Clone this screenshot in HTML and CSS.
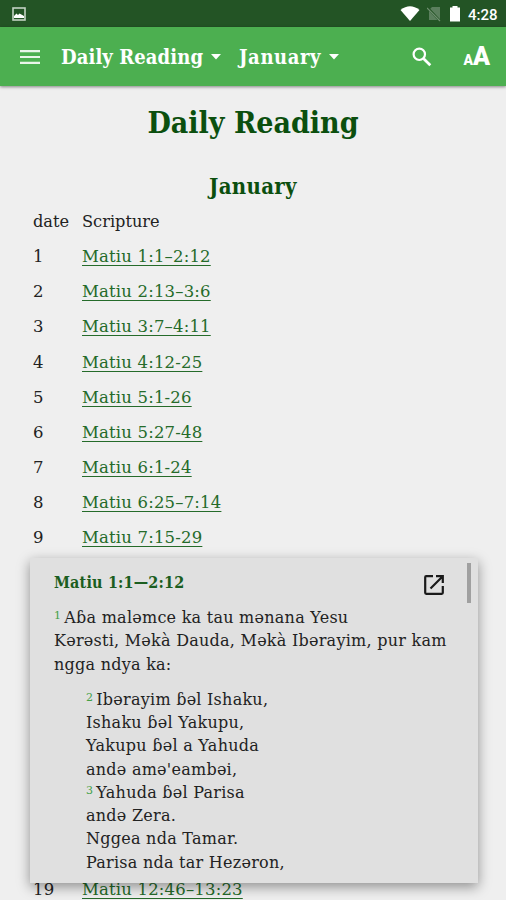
FILE: index.html
```html
<!DOCTYPE html>
<html lang="en">
<head>
  <meta charset="UTF-8">
  <title>Daily Reading</title>
  <link rel="stylesheet" href="styles.css">
</head>
<body>
  <div class="status-bar">
    <svg class="status-picture" width="14" height="14" viewBox="0 0 14 14">
      <rect x="1" y="1" width="12" height="12" fill="none" stroke="#c3d2c4" stroke-width="1.6"/>
      <path d="M2 11V9l2.500-2.500L6 8l1.500-1.500L12 9v2z" fill="#fff"/>
    </svg>
    <div class="status-icons">
      <svg width="20" height="15" viewBox="0 0 20 15"><path d="M.5 4Q10-3.500 19.500 4L10 15z" fill="#fff"/></svg>
      <svg class="no-sim" width="14" height="16" viewBox="0 0 14 16">
        <path d="M5 1h8v13H2V4z" fill="#5b7f5d"/>
        <path d="M0 1l13 14" stroke="#235425" stroke-width="2.500"/>
        <path d="M0 2l13 13" stroke="#6f8f70" stroke-width="1.200"/>
      </svg>
      <svg class="battery" width="12" height="16" viewBox="0 0 12 16"><path d="M3.500 0h5v1.500H11V15.500H1V1.500h2.500z" fill="#fff"/></svg>
      <span class="clock">4:28</span>
    </div>
  </div>

  <div class="app-bar">
    <svg class="menu-icon" width="20" height="14" viewBox="0 0 20 14"><path d="M0 1.200h20M0 7h20M0 12.800h20" stroke="#e9f5e9" stroke-width="2.200"/></svg>
    <div class="picker book">Daily Reading</div>
    <svg class="caret" width="10" height="6" viewBox="0 0 10 6"><path d="M0 0h10L5 5.500z" fill="#fff"/></svg>
    <div class="picker month">January</div>
    <svg class="caret" width="10" height="6" viewBox="0 0 10 6"><path d="M0 0h10L5 5.500z" fill="#fff"/></svg>
    <svg class="search-icon" width="20" height="20" viewBox="0 0 20 20" fill="none" stroke="#fff">
      <circle cx="7.300" cy="7.300" r="5.700" stroke-width="2.200"/>
      <path d="M11.700 11.700l6.600 6.600" stroke-width="2.700"/>
    </svg>
    <div class="text-size"><span class="small-a">A</span><span class="big-a">A</span></div>
  </div>

  <div class="content">
    <h1>Daily Reading</h1>
    <h2>January</h2>
    <div class="plan">
      <div class="row head"><span class="date">date</span><span>Scripture</span></div>
      <div class="row"><span class="date">1</span><a>Matiu 1:1–2:12</a></div>
      <div class="row"><span class="date">2</span><a>Matiu 2:13–3:6</a></div>
      <div class="row"><span class="date">3</span><a>Matiu 3:7–4:11</a></div>
      <div class="row"><span class="date">4</span><a>Matiu 4:12-25</a></div>
      <div class="row"><span class="date">5</span><a>Matiu 5:1-26</a></div>
      <div class="row"><span class="date">6</span><a>Matiu 5:27-48</a></div>
      <div class="row"><span class="date">7</span><a>Matiu 6:1-24</a></div>
      <div class="row"><span class="date">8</span><a>Matiu 6:25–7:14</a></div>
      <div class="row"><span class="date">9</span><a>Matiu 7:15-29</a></div>
      <!-- days 10 to 18 sit behind the popup -->
      <div class="covered-rows"></div>
      <div class="row"><span class="date">19</span><a>Matiu 12:46–13:23</a></div>
    </div>
  </div>

  <div class="popup">
    <div class="popup-head">
      <h3>Matiu 1:1—2:12</h3>
      <svg class="open-icon" width="20" height="20" viewBox="0 0 20 20" fill="none" stroke="#1a1a1a" stroke-width="2.200">
        <path d="M9 1.200H2.200Q1.200 1.200 1.200 2.200V17.800Q1.200 18.800 2.200 18.800H17.800Q18.800 18.800 18.800 17.800V11"/>
        <path d="M12 1.200h6.800V8M18.500 1.500L6.500 13.500"/>
      </svg>
    </div>
    <p class="prose"><span class="verse">1</span>Aɓa maləmce ka tau mənana Yesu<br>Kərəsti, Məkà Dauda, Məkà Ibərayim, pur kam<br>ngga ndya ka:</p>
    <p class="poetry"><span class="verse">2</span>Ibərayim ɓəl Ishaku,<br>Ishaku ɓəl Yakupu,<br>Yakupu ɓəl a Yahuda<br>andə amə'eambəi,<br><span class="verse">3</span>Yahuda ɓəl Parisa<br>andə Zera.<br>Nggea nda Tamar.<br>Parisa nda tar Hezəron,</p>
    <div class="scrollbar"></div>
  </div>
</body>
</html>
```
FILE: styles.css
```css
body {
  margin: 0;
  height: 900px;
  overflow: hidden;
  position: relative;
  background-color: #efefef;
  color: #222;
  font-family: "DejaVu Serif", serif;
}
h1, h2, h3, p {
  margin: 0;
}
.status-bar {
  height: 27px;
  background-color: #235425;
  display: flex;
  justify-content: space-between;
  box-sizing: border-box;
  padding: 7px 8px 0 12px;
}
.status-icons {
  display: flex;
  align-items: flex-start;
  margin-top: -1px;
}
.no-sim {
  margin-left: 7px;
}
.battery {
  margin-left: 8px;
}
.clock {
  font: 500 15px/18px Roboto, sans-serif;
  color: #fff;
  width: 30px;
  margin-left: 7px;
}
.app-bar {
  height: 59px;
  background-color: #4caf50;
  box-shadow: 0 1px 3px rgba(0, 0, 0, 0.45);
  display: flex;
  align-items: center;
  box-sizing: border-box;
  padding: 0 16px 0 20px;
  color: #fff;
}
.picker, h1, h2, h3 {
  font-family: "DejaVu Serif Condensed", "DejaVu Serif", serif;
  font-stretch: condensed;
}
.picker {
  font-size: 20px;
  font-weight: bold;
  line-height: 28px;
  white-space: nowrap;
}
.book {
  width: 150px;
  margin-left: 21px;
  letter-spacing: 0.1px;
}
.month {
  width: 90px;
  margin-left: 18px;
  letter-spacing: 0.6px;
}
.search-icon {
  margin-left: 73px;
}
.text-size {
  margin-left: auto;
  padding-top: 3px;
  display: flex;
  align-items: baseline;
  font-family: Roboto, sans-serif;
  font-weight: 900;
  line-height: 28px;
}
.small-a {
  font-size: 14px;
}
.big-a {
  font-size: 25px;
}
.content {
  padding: 0 33px;
}
h1 {
  color: #0b4f0e;
  font-size: 30px;
  line-height: 40px;
  padding-top: 17px;
  text-align: center;
  white-space: nowrap;
}
h2 {
  color: #0b4f0e;
  font-size: 22px;
  line-height: 30px;
  padding-top: 28px;
  letter-spacing: 0.3px;
  text-align: center;
}
.plan {
  padding-top: 3px;
}
.row {
  display: flex;
  height: 35.170px;
  line-height: 35px;
  font-size: 16.500px;
  letter-spacing: 0.170px;
  white-space: nowrap;
}
.head {
  font-size: 16.200px;
  letter-spacing: 0;
}
.date {
  width: 49px;
}
.row a {
  color: #256b2a;
  text-decoration: underline;
  text-decoration-thickness: 1px;
  text-underline-offset: 3px;
}
.covered-rows {
  height: 316.500px;
}
.popup {
  position: absolute;
  left: 30px;
  top: 558px;
  width: 448px;
  height: 325px;
  box-sizing: border-box;
  padding: 12px 24px 0;
  background-color: #e0e0e0;
  box-shadow: 0 4px 12px rgba(0, 0, 0, 0.4);
  overflow: hidden;
}
.popup-head {
  display: flex;
  justify-content: space-between;
  padding-right: 10px;
}
h3 {
  color: #1b5e20;
  font-size: 16px;
  letter-spacing: 0.170px;
  line-height: 26px;
}
.open-icon {
  margin-top: 5px;
}
.prose, .poetry {
  font-size: 16px;
  letter-spacing: 0.250px;
  line-height: 23.250px;
  white-space: nowrap;
}
.prose {
  padding-top: 10px;
}
.poetry {
  padding: 12px 0 0 32px;
}
.verse {
  color: #43a047;
  font-size: 11px;
  line-height: 0;
  position: relative;
  top: -4px;
  margin-right: 3px;
}
.scrollbar {
  position: absolute;
  top: 5px;
  right: 7px;
  width: 4px;
  height: 40px;
  background-color: #a0a0a0;
}
```
